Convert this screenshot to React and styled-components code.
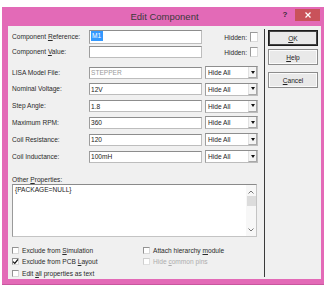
import styled, { createGlobalStyle } from "styled-components";

const GlobalStyle = createGlobalStyle`
  html, body {
    margin: 0;
    padding: 0;
    background: #fff;
  }
  body {
    font-family: "Liberation Sans", Arial, sans-serif;
  }
`;

const properties = [
  { label: "LISA Model File:", value: "STEPPER", muted: true, mt: 8 },
  { label: "Nominal Voltage:", value: "12V", mt: 3.8 },
  { label: "Step Angle:", value: "1.8", mt: 3.8 },
  { label: "Maximum RPM:", value: "360", mt: 3.8 },
  { label: "Coil Resistance:", value: "120", mt: 3.8 },
  { label: "Coil Inductance:", value: "100mH", mt: 3.8 },
];

function CheckBox({ checked, disabled }) {
  return (
    <Box $disabled={disabled}>
      {checked && (
        <svg width="7" height="7" viewBox="0 0 7 7">
          <polyline points="1,3.6 2.8,5.4 6,1.4" fill="none" stroke="#111" strokeWidth="1.3" />
        </svg>
      )}
    </Box>
  );
}

function HideSelect() {
  return (
    <Select>
      <span>Hide All</span>
      <ArrowBox>
        <Triangle />
      </ArrowBox>
    </Select>
  );
}

export default function App() {
  return (
    <Page>
      <GlobalStyle />
      <Window>
        <TitleBar>
          <span />
          <Title>Edit Component</Title>
          <Controls>
            <HelpMark>?</HelpMark>
            <CloseButton>
              <svg width="6" height="6" viewBox="0 0 6 6">
                <path d="M0.5 0.5 L5.5 5.5 M5.5 0.5 L0.5 5.5" stroke="#fff" strokeWidth="1.2" />
              </svg>
            </CloseButton>
          </Controls>
        </TitleBar>
        <Frame>
          <Client>
            <LeftPane>
              <Row $mt={0}>
                <Label>
                  Component <u>R</u>eference:
                </Label>
                <Field $h={14}>
                  <Selected>M1</Selected>
                </Field>
                <Extra>
                  <span>Hidden:</span>
                  <HiddenBox />
                </Extra>
              </Row>
              <Row $mt={2}>
                <Label>
                  Component <u>V</u>alue:
                </Label>
                <Field $h={12} />
                <Extra>
                  <span>Hidden:</span>
                  <HiddenBox />
                </Extra>
              </Row>
              {properties.map((p) => (
                <Row key={p.label} $mt={p.mt}>
                  <Label>{p.label}</Label>
                  <Field $h={12} $muted={p.muted}>
                    {p.value}
                  </Field>
                  <Extra>
                    <HideSelect />
                  </Extra>
                </Row>
              ))}
              <OtherLabel>
                Other <u>P</u>roperties:
              </OtherLabel>
              <TextBox>
                <TextContent>{"{PACKAGE=NULL}"}</TextContent>
                <ScrollBar>
                  <svg width="6" height="4" viewBox="0 0 6 4">
                    <polyline points="0.5,3.5 3,1 5.5,3.5" fill="none" stroke="#777" strokeWidth="1" />
                  </svg>
                  <Thumb />
                  <ScrollSpacer />
                  <svg width="6" height="4" viewBox="0 0 6 4">
                    <polyline points="0.5,0.5 3,3 5.5,0.5" fill="none" stroke="#777" strokeWidth="1" />
                  </svg>
                </ScrollBar>
              </TextBox>
              <Options>
                <Option>
                  <CheckBox />
                  <span>
                    Exclude from <u>S</u>imulation
                  </span>
                </Option>
                <Option>
                  <CheckBox />
                  <span>
                    Attach hierarchy <u>m</u>odule
                  </span>
                </Option>
                <Option>
                  <CheckBox checked />
                  <span>
                    Exclude from PCB <u>L</u>ayout
                  </span>
                </Option>
                <Option $disabled>
                  <CheckBox disabled />
                  <span>
                    Hide <u>c</u>ommon pins
                  </span>
                </Option>
                <Option>
                  <CheckBox />
                  <span>
                    Edit <u>a</u>ll properties as text
                  </span>
                </Option>
              </Options>
            </LeftPane>
            <RightPane>
              <Button $default>
                <u>O</u>K
              </Button>
              <Button>
                <u>H</u>elp
              </Button>
              <Button $mt={4}>
                <u>C</u>ancel
              </Button>
            </RightPane>
          </Client>
        </Frame>
      </Window>
    </Page>
  );
}

const Page = styled.div`
  width: 332px;
  height: 291px;
  padding: 7px 0 0 2px;
  box-sizing: border-box;
`;

const Window = styled.div`
  width: 322px;
  height: 278px;
  background: #e36ab7;
  display: flex;
  flex-direction: column;
  box-shadow: inset 0 -1px 0 #c9579f;
`;

const TitleBar = styled.div`
  height: 25px;
  display: grid;
  grid-template-columns: 1fr auto 1fr;
  align-items: start;
`;

const Title = styled.div`
  margin-top: 4px;
  font-size: 9.5px;
  line-height: 12px;
  color: #3a3a3a;
  padding-left: 3px;
`;

const Controls = styled.div`
  display: flex;
  justify-content: flex-end;
  align-items: flex-start;
  padding-right: 4px;
  gap: 5px;
`;

const HelpMark = styled.div`
  width: 10px;
  margin-top: 3px;
  font-size: 8px;
  font-weight: bold;
  line-height: 10px;
  text-align: center;
  color: #3b2a3a;
`;

const CloseButton = styled.div`
  width: 25px;
  height: 12px;
  margin-top: 2px;
  background: #c9525a;
  display: flex;
  align-items: center;
  justify-content: center;
`;

const Frame = styled.div`
  flex: 1;
  padding: 0 3px 6px 6px;
  display: flex;
`;

const Client = styled.div`
  flex: 1;
  background: #f0f0f0;
  display: flex;
  font-size: 6.6px;
  color: #2a2a2a;
`;

const LeftPane = styled.div`
  width: 256px;
  box-sizing: border-box;
  padding: 4px 0 0 4px;
  display: flex;
  flex-direction: column;
`;

const Row = styled.div`
  display: flex;
  align-items: center;
  margin-top: ${(p) => p.$mt}px;
`;

const Label = styled.div`
  width: 77px;
  white-space: nowrap;
  line-height: 8px;
`;

const Field = styled.div`
  width: 113px;
  height: ${(p) => p.$h}px;
  box-sizing: border-box;
  border: 1px solid #bdbdbd;
  border-top-color: #8d8d8d;
  border-left-color: #9d9d9d;
  background: #fff;
  padding: 0 1px;
  display: flex;
  align-items: center;
  color: ${(p) => (p.$muted ? "#9a9a9a" : "#222")};
  white-space: nowrap;
`;

const Selected = styled.span`
  background: #3399ff;
  color: #fff;
  line-height: 10px;
  padding: 0 2px 0 1px;
  align-self: flex-start;
`;

const Extra = styled.div`
  width: 53px;
  margin-left: 3px;
  display: flex;
  align-items: center;
  justify-content: flex-end;
  gap: 3px;
  white-space: nowrap;
`;

const HiddenBox = styled.div`
  width: 8px;
  height: 10px;
  box-sizing: border-box;
  background: #fff;
  border: 1px solid #dadada;
  border-top-color: #9a9a9a;
  border-left-color: #9a9a9a;
`;

const Select = styled.div`
  width: 53px;
  height: 13px;
  box-sizing: border-box;
  background: #fff;
  border: 1px solid #bcbcbc;
  border-top-color: #8e8e8e;
  border-left-color: #9e9e9e;
  display: flex;
  align-items: center;
  justify-content: space-between;
  padding-left: 2px;
  color: #222;
`;

const ArrowBox = styled.div`
  width: 9px;
  height: 11px;
  box-sizing: border-box;
  background: #f4f4f4;
  border-left: 1px solid #e2e2e2;
  border-bottom: 1px solid #a8a8a8;
  border-right: 1px solid #a8a8a8;
  display: flex;
  align-items: center;
  justify-content: center;
`;

const Triangle = styled.div`
  width: 0;
  height: 0;
  border-left: 2.5px solid transparent;
  border-right: 2.5px solid transparent;
  border-top: 3px solid #111;
`;

const OtherLabel = styled.div`
  margin-top: 13px;
  line-height: 8px;
  height: 8px;
`;

const TextBox = styled.div`
  width: 245px;
  height: 53px;
  box-sizing: border-box;
  background: #fff;
  border: 1px solid #c4c4c4;
  border-top-color: #8a8a8a;
  border-left-color: #9a9a9a;
  display: flex;
`;

const TextContent = styled.div`
  flex: 1;
  padding: 1px 2px;
  line-height: 8px;
  color: #222;
`;

const ScrollBar = styled.div`
  width: 10px;
  background: #f7f7f7;
  display: flex;
  flex-direction: column;
  align-items: center;
  padding: 5px 0 4px;
  box-sizing: border-box;
`;

const Thumb = styled.div`
  width: 9px;
  height: 10px;
  margin-top: 2px;
  background: #dcdcdc;
`;

const ScrollSpacer = styled.div`
  flex: 1;
`;

const Options = styled.div`
  margin-top: 7.5px;
  display: grid;
  grid-template-columns: 131px 1fr;
  grid-auto-rows: 11.5px;
`;

const Option = styled.div`
  display: flex;
  align-items: center;
  gap: 3px;
  white-space: nowrap;
  color: ${(p) => (p.$disabled ? "#adadad" : "#2a2a2a")};
`;

const Box = styled.div`
  width: 7px;
  height: 7px;
  box-sizing: border-box;
  background: #fff;
  border: 1px solid ${(p) => (p.$disabled ? "#e0e0e0" : "#d8d8d8")};
  border-top-color: ${(p) => (p.$disabled ? "#cfcfcf" : "#939393")};
  border-left-color: ${(p) => (p.$disabled ? "#cfcfcf" : "#939393")};
  display: flex;
  align-items: center;
  justify-content: center;
  overflow: visible;

  svg {
    flex-shrink: 0;
  }
`;

const RightPane = styled.div`
  flex: 1;
  margin: 3px 0 2px;
  border-left: 1px solid #3a3a3a;
  padding: 1px 0 0 3px;
  display: flex;
  flex-direction: column;
  gap: 3px;
`;

const Button = styled.div`
  width: 50px;
  height: 16px;
  box-sizing: border-box;
  margin-top: ${(p) => p.$mt || 0}px;
  background: #e9e9e9;
  border: 1px solid ${(p) => (p.$default ? "#1c1c1c" : "#8c8c8c")};
  box-shadow: inset 0 0 0 1px ${(p) => (p.$default ? "#444" : "#fbfbfb")};
  display: flex;
  align-items: center;
  justify-content: center;
  color: #222;
`;
